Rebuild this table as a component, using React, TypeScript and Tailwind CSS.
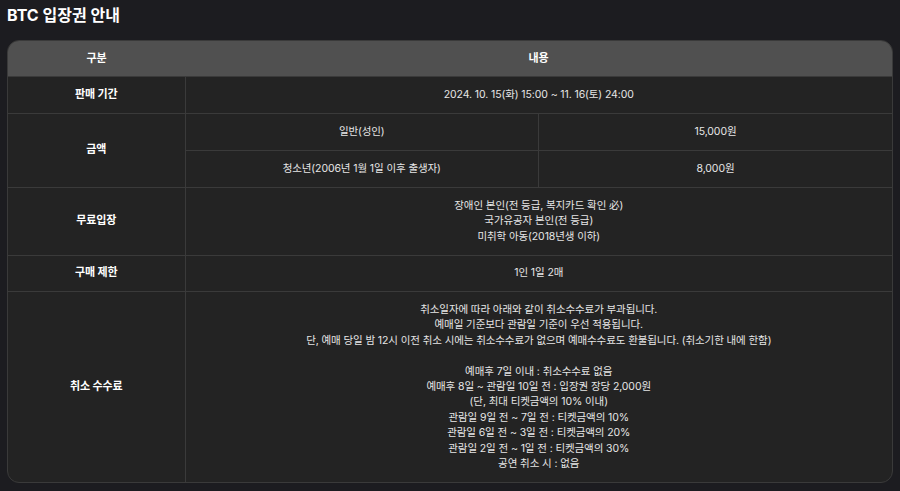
const cell = "border border-[#3a3a3a] text-center align-middle px-2 py-[9px]";
const label = `${cell} font-bold text-white text-[11px]`;

const cancelLines = [
  "취소일자에 따라 아래와 같이 취소수수료가 부과됩니다.",
  "예매일 기준보다 관람일 기준이 우선 적용됩니다.",
  "단, 예매 당일 밤 12시 이전 취소 시에는 취소수수료가 없으며 예매수수료도 환불됩니다. (취소기한 내에 한함)",
  "",
  "예매후 7일 이내 : 취소수수료 없음",
  "예매후 8일 ~ 관람일 10일 전 : 입장권 장당 2,000원",
  "(단, 최대 티켓금액의 10% 이내)",
  "관람일 9일 전 ~ 7일 전 : 티켓금액의 10%",
  "관람일 6일 전 ~ 3일 전 : 티켓금액의 20%",
  "관람일 2일 전 ~ 1일 전 : 티켓금액의 30%",
  "공연 취소 시 : 없음",
];

export default function App() {
  return (
    <div
      className="min-h-[491px] bg-[#1c1c20] px-[7px] pt-[4px] pb-2 text-[#e6e6e6]"
      style={{ fontFamily: 'Inter, "Noto Sans CJK KR", sans-serif' }}
    >
      <h2 className="text-[16px] font-bold text-white leading-[22px] mb-[14px]">BTC 입장권 안내</h2>

      <div className="rounded-[12px] overflow-hidden border border-[#3a3a3a] bg-[#232323]">
        <table className="w-full table-fixed border-collapse border-hidden text-[10.5px] tracking-[-0.1px] leading-[15.4px]">
          <colgroup>
            <col className="w-[177px]" />
            <col />
            <col />
          </colgroup>
          <thead>
            <tr className="bg-[#505050] h-[35px]">
              <th className="text-center font-bold text-white text-[11px] px-2">구분</th>
              <th colSpan={2} className="text-center font-bold text-white text-[11px] px-2">내용</th>
            </tr>
          </thead>
          <tbody>
            <tr className="h-[37px]">
              <td className={label}>판매 기간</td>
              <td colSpan={2} className={cell}>2024. 10. 15(화) 15:00 ~ 11. 16(토) 24:00</td>
            </tr>
            <tr className="h-[37px]">
              <td rowSpan={2} className={label}>금액</td>
              <td className={cell}>일반(성인)</td>
              <td className={cell}>15,000원</td>
            </tr>
            <tr className="h-[37px]">
              <td className={cell}>청소년(2006년 1월 1일 이후 출생자)</td>
              <td className={cell}>8,000원</td>
            </tr>
            <tr className="h-[68px]">
              <td className={label}>무료입장</td>
              <td colSpan={2} className={cell}>
                <p>장애인 본인(전 등급, 복지카드 확인 必)</p>
                <p>국가유공자 본인(전 등급)</p>
                <p>미취학 아동(2018년생 이하)</p>
              </td>
            </tr>
            <tr className="h-[36px]">
              <td className={label}>구매 제한</td>
              <td colSpan={2} className={cell}>1인 1일 2매</td>
            </tr>
            <tr className="h-[191px]">
              <td className={label}>취소 수수료</td>
              <td colSpan={2} className={cell}>
                {cancelLines.map((line, i) => (
                  <p key={i} className="min-h-[15.4px]">{line}</p>
                ))}
              </td>
            </tr>
          </tbody>
        </table>
      </div>
    </div>
  );
}
